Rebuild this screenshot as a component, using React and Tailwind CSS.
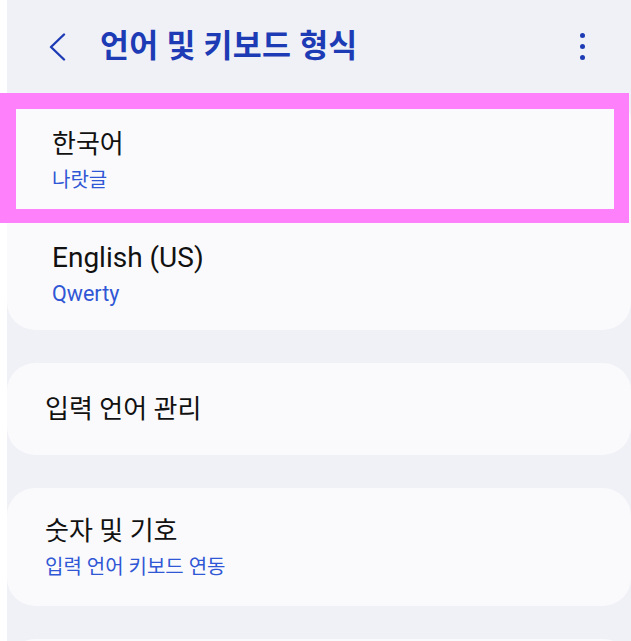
import React from "react";

const font = { fontFamily: 'Roboto, "Noto Sans CJK KR", sans-serif' };

function Item({ title, sub, px, tSize = "text-[26px]", sSize = "text-[20px]" }) {
  return (
    <div className={`flex flex-col ${px}`}>
      <div className={`${tSize} leading-[34px] text-[#111111]`}>{title}</div>
      {sub && <div className={`${sSize} leading-[26px] text-[#3057d5] mt-[6px]`}>{sub}</div>}
    </div>
  );
}

export default function App() {
  return (
    <div className="relative flex w-[631px] h-[641px] overflow-hidden bg-white" style={font}>
      <div className="ml-[7px] flex-1 bg-[#f0f1f6] flex flex-col">
        <div className="shrink-0 h-[93px] flex items-start pt-[30px]">
          <div className="w-[93px] pl-[41px] pt-[3px]">
            <svg width="18" height="28" viewBox="0 0 18 28" fill="none">
              <path d="M16 1.5 L3 14 L16 26.5" stroke="#1d3bb5" strokeWidth="2.4" strokeLinecap="round" strokeLinejoin="round" />
            </svg>
          </div>
          <div className="text-[31.5px] leading-[34px] font-bold text-[#1d3bb5] tracking-[0.2px]">언어 및 키보드 형식</div>
          <div className="ml-auto mr-[46px] mt-[3px] flex flex-col gap-[6px] items-center">
            <span className="w-[5px] h-[5px] rounded-full bg-[#1d3bb5]" />
            <span className="w-[5px] h-[5px] rounded-full bg-[#1d3bb5]" />
            <span className="w-[5px] h-[5px] rounded-full bg-[#1d3bb5]" />
          </div>
        </div>

        <div className="shrink-0 h-[237px] bg-[#fafafc] rounded-[28px] flex flex-col">
          <div className="h-[148px] pt-[34px]">
            <Item title="한국어" sub="나랏글" px="pl-[45px]" />
          </div>
          <div>
            <Item title="English (US)" sub="Qwerty" px="pl-[45px]" tSize="text-[28px]" sSize="text-[21.5px]" />
          </div>
        </div>

        <div className="shrink-0 mt-[33px] h-[92px] bg-[#fafafc] rounded-[28px] flex items-center">
          <Item title="입력 언어 관리" px="pl-[38px]" />
        </div>

        <div className="shrink-0 mt-[33px] h-[118px] bg-[#fafafc] rounded-[28px] flex items-center">
          <Item title="숫자 및 기호" sub="입력 언어 키보드 연동" px="pl-[38px]" />
        </div>

        <div className="shrink-0 mt-[33px] h-[60px] bg-[#fafafc] rounded-[28px]" />
      </div>

      <div className="absolute left-0 top-[93px] w-[629px] h-[130px] border-[#ff80fb] border-t-[16px] border-l-[16px] border-r-[15px] border-b-[14px]" />
    </div>
  );
}
